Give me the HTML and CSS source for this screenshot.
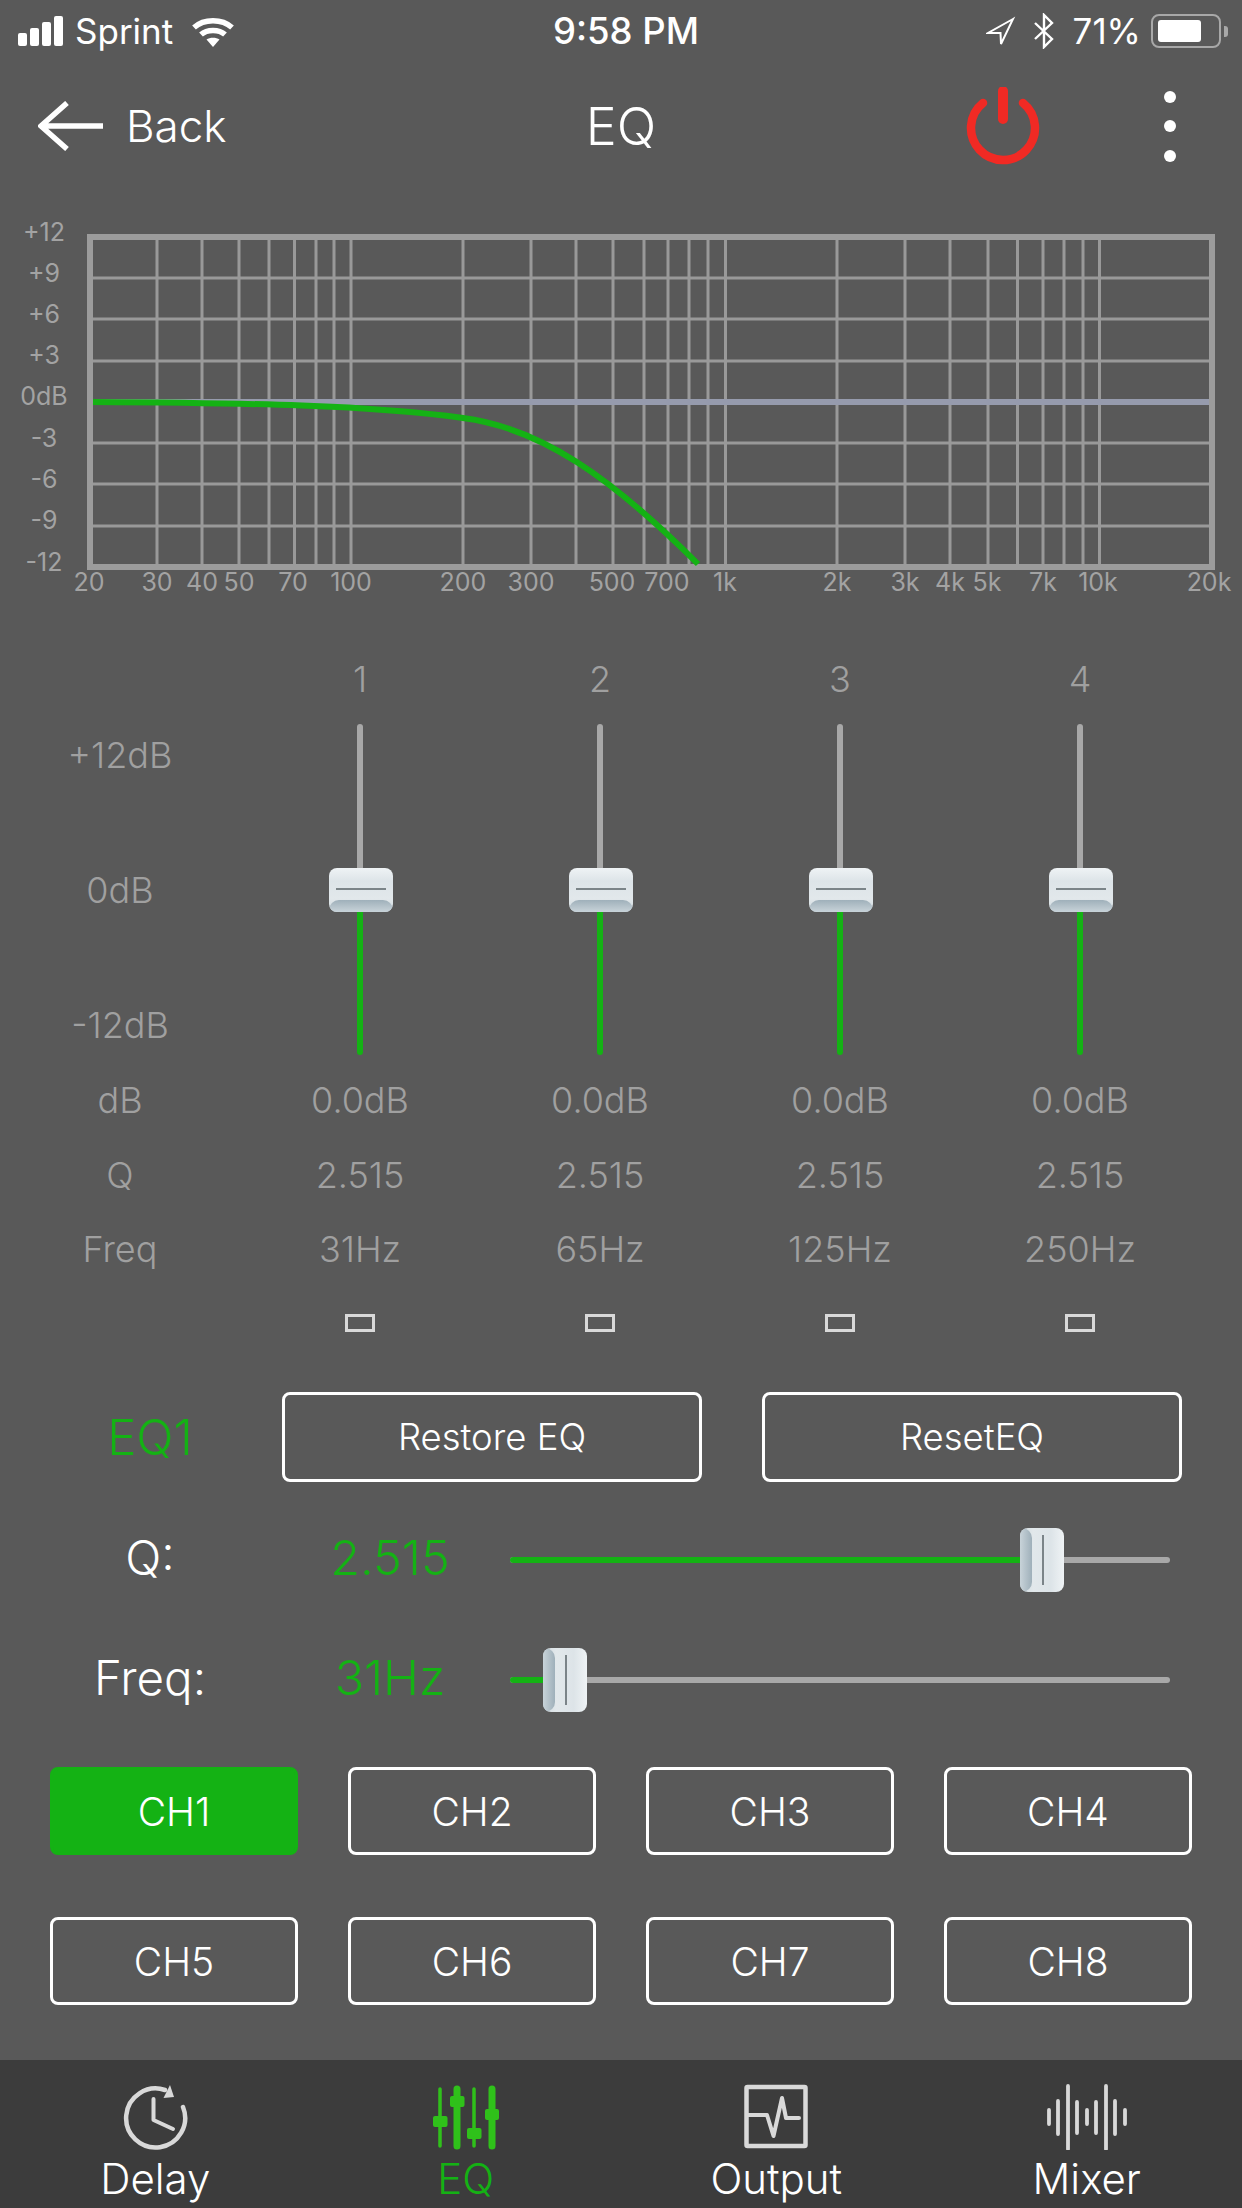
FILE: index.html
```html
<!DOCTYPE html>
<html lang="en">
<head>
  <meta charset="UTF-8">
  <title>EQ</title>
  <link rel="stylesheet" href="styles.css">
</head>
<body>
  <div class="page">
    <div class="status-bar">
      <div class="status-left">
        <div class="signal"><i class="s1"></i><i class="s2"></i><i class="s3"></i><i class="s4"></i></div>
        <span class="carrier">Sprint</span>
        <svg class="wifi" width="44" height="31" viewBox="0 0 44 31">
          <path d="M3 11.5C13 2.5 31 2.5 41 11.5" fill="none" stroke="#fff" stroke-width="5.5"/>
          <path d="M10 18.5C16 13 28 13 34 18.5" fill="none" stroke="#fff" stroke-width="5.5"/>
          <path d="M15.5 23.5C19 21 25 21 28.5 23.5L22 31Z" fill="#fff"/>
        </svg>
      </div>
      <span class="clock">9:58 PM</span>
      <div class="status-right">
        <svg width="30" height="30" viewBox="0 0 30 30"><path d="M27 3L2 17H14.5L15 28Z" fill="none" stroke="#fff" stroke-width="2"/></svg>
        <svg class="bluetooth" width="22" height="36" viewBox="0 0 22 36"><path d="M2 10L19 26L11 34V2L19 10L2 26" fill="none" stroke="#fff" stroke-width="2.4"/></svg>
        <span class="percent">71%</span>
        <div class="battery"><div class="battery-fill"></div></div>
        <div class="battery-nub"></div>
      </div>
    </div>

    <div class="nav-bar">
      <div class="back">
        <svg width="66" height="50" viewBox="0 0 66 50"><path d="M29 2L3 25L29 48M3 25H65" fill="none" stroke="#fff" stroke-width="5.5"/></svg>
        <span>Back</span>
      </div>
      <div class="nav-title">EQ</div>
      <svg class="power" width="76" height="80" viewBox="0 0 76 80">
        <path d="M18 16A32 32 0 1 0 58 16" fill="none" stroke="#f12a24" stroke-width="8.5" stroke-linecap="round"/>
        <path d="M38 4V32" fill="none" stroke="#f12a24" stroke-width="10" stroke-linecap="round"/>
      </svg>
      <div class="more"><i></i><i></i><i></i></div>
    </div>

    <svg class="chart" width="1242" height="400" viewBox="0 0 1242 400">
      <path class="grid-thin" d="M157 40V364M202 40V364M239 40V364M269 40V364M294.5 40V364M316 40V364M334 40V364M351 40V364M463 40V364M531 40V364M576 40V364M613 40V364M644 40V364M668 40V364M689 40V364M708 40V364M725.5 40V364M837 40V364M905 40V364M950 40V364M988 40V364M1017.5 40V364M1043 40V364M1064 40V364M1083 40V364M1099.5 40V364"/>
      <path class="grid-thin" d="M90 78H1212M90 119H1212M90 161H1212M90 243H1212M90 284H1212M90 326H1212"/>
      <path class="zero-line" d="M93 202H1209"/>
      <rect class="grid-frame" x="90" y="37" width="1122" height="330"/>
      <path class="curve" d="M93 202C250 203 370 205 463 218C540 228 610 276 698 364"/>
      <g class="chart-label">
        <text x="44" y="41">+12</text>
        <text x="44" y="82">+9</text>
        <text x="44" y="123">+6</text>
        <text x="44" y="164">+3</text>
        <text x="44" y="205">0dB</text>
        <text x="44" y="247">-3</text>
        <text x="44" y="288">-6</text>
        <text x="44" y="329">-9</text>
        <text x="44" y="371">-12</text>
        <text x="89" y="391">20</text>
        <text x="157" y="391">30</text>
        <text x="202" y="391">40</text>
        <text x="239" y="391">50</text>
        <text x="293" y="391">70</text>
        <text x="351" y="391">100</text>
        <text x="463" y="391">200</text>
        <text x="531" y="391">300</text>
        <text x="612" y="391">500</text>
        <text x="667" y="391">700</text>
        <text x="725" y="391">1k</text>
        <text x="837" y="391">2k</text>
        <text x="905" y="391">3k</text>
        <text x="950" y="391">4k</text>
        <text x="987" y="391">5k</text>
        <text x="1043" y="391">7k</text>
        <text x="1098" y="391">10k</text>
        <text x="1209" y="391">20k</text>
      </g>
    </svg>

    <div class="bands">
      <div></div>
      <div>1</div><div>2</div><div>3</div><div>4</div>

      <div class="scale">
        <span>+12dB</span>
        <span>0dB</span>
        <span>-12dB</span>
      </div>
      <div class="fader"><div class="fader-top"></div><div class="fader-bottom"></div><div class="knob"></div></div>
      <div class="fader"><div class="fader-top"></div><div class="fader-bottom"></div><div class="knob"></div></div>
      <div class="fader"><div class="fader-top"></div><div class="fader-bottom"></div><div class="knob"></div></div>
      <div class="fader"><div class="fader-top"></div><div class="fader-bottom"></div><div class="knob"></div></div>

      <div>dB</div><div>0.0dB</div><div>0.0dB</div><div>0.0dB</div><div>0.0dB</div>
      <div>Q</div><div>2.515</div><div>2.515</div><div>2.515</div><div>2.515</div>
      <div>Freq</div><div>31Hz</div><div>65Hz</div><div>125Hz</div><div>250Hz</div>

      <div></div>
      <div><span class="band-mark"></span></div>
      <div><span class="band-mark"></span></div>
      <div><span class="band-mark"></span></div>
      <div><span class="band-mark"></span></div>
    </div>

    <div class="eq-actions">
      <div class="eq-name">EQ1</div>
      <button class="btn">Restore EQ</button>
      <button class="btn">ResetEQ</button>
    </div>

    <div class="param param-q">
      <div class="param-name">Q:</div>
      <div class="param-value">2.515</div>
      <div class="slider">
        <div class="slider-fill" style="width: 80.6%"></div>
        <div class="knob knob-h" style="left: 80.6%"></div>
      </div>
    </div>
    <div class="param param-freq">
      <div class="param-name">Freq:</div>
      <div class="param-value">31Hz</div>
      <div class="slider">
        <div class="slider-fill" style="width: 8.3%"></div>
        <div class="knob knob-h" style="left: 8.3%"></div>
      </div>
    </div>

    <div class="channels">
      <button class="btn active">CH1</button>
      <button class="btn">CH2</button>
      <button class="btn">CH3</button>
      <button class="btn">CH4</button>
      <button class="btn">CH5</button>
      <button class="btn">CH6</button>
      <button class="btn">CH7</button>
      <button class="btn">CH8</button>
    </div>

    <div class="tab-bar">
      <div class="tab">
        <svg width="72" height="66" viewBox="0 0 72 66">
          <path d="M64 23A29.5 29.5 0 1 1 46 6" fill="none" stroke="#d9d9d9" stroke-width="4.5" stroke-linecap="round"/>
          <path d="M51 1L55 13L44.5 14Z" fill="#d9d9d9"/>
          <path d="M34.5 15V36L54 45" fill="none" stroke="#d9d9d9" stroke-width="4" stroke-linecap="round" stroke-linejoin="round"/>
        </svg>
        <span>Delay</span>
      </div>
      <div class="tab tab-active">
        <svg width="72" height="66" viewBox="0 0 72 66">
          <g fill="none" stroke="#2fc11a" stroke-linecap="round">
            <path d="M10 5V62M44 5V62" stroke-width="3.5"/>
            <path d="M27 5V62M62 5V62" stroke-width="7"/>
          </g>
          <g fill="#2fc11a">
            <rect x="3" y="32" width="14.5" height="11" rx="2"/>
            <rect x="20" y="12" width="14.5" height="11" rx="2"/>
            <rect x="37" y="44" width="14.5" height="11" rx="2"/>
            <rect x="55" y="25" width="14" height="11" rx="2"/>
          </g>
        </svg>
        <span>EQ</span>
      </div>
      <div class="tab">
        <svg width="72" height="66" viewBox="0 0 72 66">
          <rect x="6.5" y="3" width="59" height="59" rx="1" fill="none" stroke="#d9d9d9" stroke-width="4.5"/>
          <path d="M8 31H27L33.5 52L42 14L46 34H59" fill="none" stroke="#d9d9d9" stroke-width="4" stroke-linecap="round" stroke-linejoin="round"/>
        </svg>
        <span>Output</span>
      </div>
      <div class="tab">
        <svg width="84" height="66" viewBox="0 0 84 66">
          <path d="M4 26V40M13 17V50M23 2V65M32 18V49M42 26V40M51 18V49M61 2V65M70 17V50M80 26V40" fill="none" stroke="#d9d9d9" stroke-width="3.8" stroke-linecap="round"/>
        </svg>
        <span>Mixer</span>
      </div>
    </div>
  </div>
</body>
</html>
```

FILE: styles.css
```css
* { box-sizing: border-box; }
body { margin: 0; background: #595959; font-family: "Inter", "Liberation Sans", sans-serif; font-weight: 300; color: #fff; }
.page { width: 1242px; height: 2208px; overflow: hidden; display: flex; flex-direction: column; background: #595959; }

/* status bar */
.status-bar { height: 62px; display: grid; grid-template-columns: 1fr auto 1fr; align-items: center; font-weight: 400; font-size: 35px; }
.status-left { display: flex; align-items: center; padding-left: 18px; }
.signal { display: flex; align-items: flex-end; gap: 3px; height: 30px; }
.signal i { display: block; width: 9px; background: #fff; border-radius: 2px; }
.s1 { height: 13px; }
.s2 { height: 18px; }
.s3 { height: 24px; }
.s4 { height: 30px; }
.carrier { margin-left: 12px; }
.wifi { margin-left: 18px; }
.clock { margin-left: 10px; font-size: 36.5px; font-weight: 500; }
.status-right { display: flex; align-items: center; justify-content: flex-end; padding-right: 14px; }
.bluetooth { margin-left: 17px; }
.percent { margin-left: 18px; }
.battery { width: 70px; height: 34px; margin-left: 10px; padding: 4px 5px; border: 2px solid #a8a8a8; border-radius: 8px; }
.battery-fill { width: 43px; height: 100%; background: #fff; border-radius: 3px; }
.battery-nub { width: 4px; height: 11px; margin-left: 3px; background: #a8a8a8; border-radius: 0 3px 3px 0; }

/* nav */
.nav-bar { height: 138px; position: relative; display: flex; align-items: center; padding-bottom: 10px; }
.back { display: flex; align-items: center; gap: 22px; margin-left: 38px; font-size: 44px; }
.nav-title { position: absolute; left: 0; right: 0; top: 33px; text-align: center; font-size: 52px; }
.power { margin-left: auto; margin-top: 2px; }
.more { display: flex; flex-direction: column; gap: 17.5px; margin: 0 66px 0 123px; }
.more i { display: block; width: 12px; height: 12px; background: #fff; border-radius: 50%; }

/* response chart */
.chart { display: block; flex: none; }
.grid-thin { fill: none; stroke: #999; stroke-width: 3; }
.zero-line { fill: none; stroke: #969bad; stroke-width: 6; }
.grid-frame { fill: none; stroke: #9c9c9c; stroke-width: 6; }
.curve { fill: none; stroke: #14b214; stroke-width: 6; }
.chart-label text { fill: #a3a3a3; font-size: 25px; font-weight: 400; text-anchor: middle; }

/* band columns */
.bands { margin-top: 42px; display: grid; grid-template-columns: repeat(5, 240px); grid-template-rows: 74px 347px 74px 75px 74px 74px; color: #a0a0a0; font-size: 36px; }
.bands > div { display: flex; align-items: center; justify-content: center; }
.bands > .scale { flex-direction: column; justify-content: flex-start; gap: 91px; padding-top: 17px; }
.scale span { line-height: 44px; }
.fader { position: relative; flex-direction: column; padding: 8px 0; }
.fader-top { width: 6px; height: 166px; background: #a8a8a8; border-radius: 3px 3px 0 0; }
.fader-bottom { width: 6px; height: 165px; background: #14b214; border-radius: 0 0 3px 3px; }
.band-mark { display: block; width: 30px; height: 18px; border: 3px solid #d9d9d9; }

/* fader knob */
.knob { position: absolute; left: 50%; top: 50%; width: 64px; height: 44px; transform: translate(-50%, -50%); overflow: hidden; border-radius: 8px; background: linear-gradient(#eff3f5, #dde4e8 30%, #e2e8eb 70%, #cfd9de); }
.fader .knob { top: 174px; left: calc(50% + 1px); }
.knob::before { content: ""; position: absolute; left: 0; right: 0; bottom: 0; height: 12px; border-radius: 10px 10px 0 0; background: linear-gradient(#9fb0ba, #c8d3d9); }
.knob::after { content: ""; position: absolute; left: 7px; right: 7px; top: 20px; height: 2px; background: #7b8488; }
.knob-h { transform: translate(-50%, -50%) rotate(90deg); }

/* actions */
.eq-actions { margin-top: 32px; display: flex; align-items: center; }
.eq-name { width: 282px; padding-left: 18px; text-align: center; font-size: 49px; color: #14b214; }
.btn { height: 90px; padding: 0; font-family: inherit; font-weight: 300; font-size: 36.5px; color: #fff; background: none; border: 3px solid #fff; border-radius: 8px; }
.eq-actions .btn { width: 420px; }
.eq-actions .btn + .btn { margin-left: 60px; }

/* Q / Freq */
.param { height: 64px; display: flex; align-items: center; }
.param-q { margin-top: 46px; }
.param-freq { margin-top: 56px; }
.param-name { width: 300px; text-align: center; font-size: 47.5px; margin-top: -5px; }
.param-value { width: 180px; text-align: center; font-size: 48.5px; color: #14b214; margin-top: -5px; }
.slider { position: relative; width: 660px; height: 6px; margin-left: 30px; background: #a8a8a8; border-radius: 3px; }
.slider-fill { height: 100%; background: #14b214; border-radius: 3px 0 0 3px; }

/* channels */
.channels { margin-top: 55px; padding: 0 50px; display: grid; grid-template-columns: repeat(4, 248px); grid-auto-rows: 88px; gap: 62px 50px; }
.channels .btn { height: 88px; font-size: 39px; }
.btn.active { background: #14b214; border-color: #14b214; }

/* tabs */
.tab-bar { margin-top: auto; height: 148px; flex: none; display: grid; grid-template-columns: repeat(4, 1fr); padding-top: 24px; background: #3c3c3c; }
.tab { display: flex; flex-direction: column; align-items: center; font-size: 42px; }
.tab svg { flex: none; display: block; }
.tab span { line-height: 46px; margin-top: 6px; }
.tab-active { color: #14b214; }
```
